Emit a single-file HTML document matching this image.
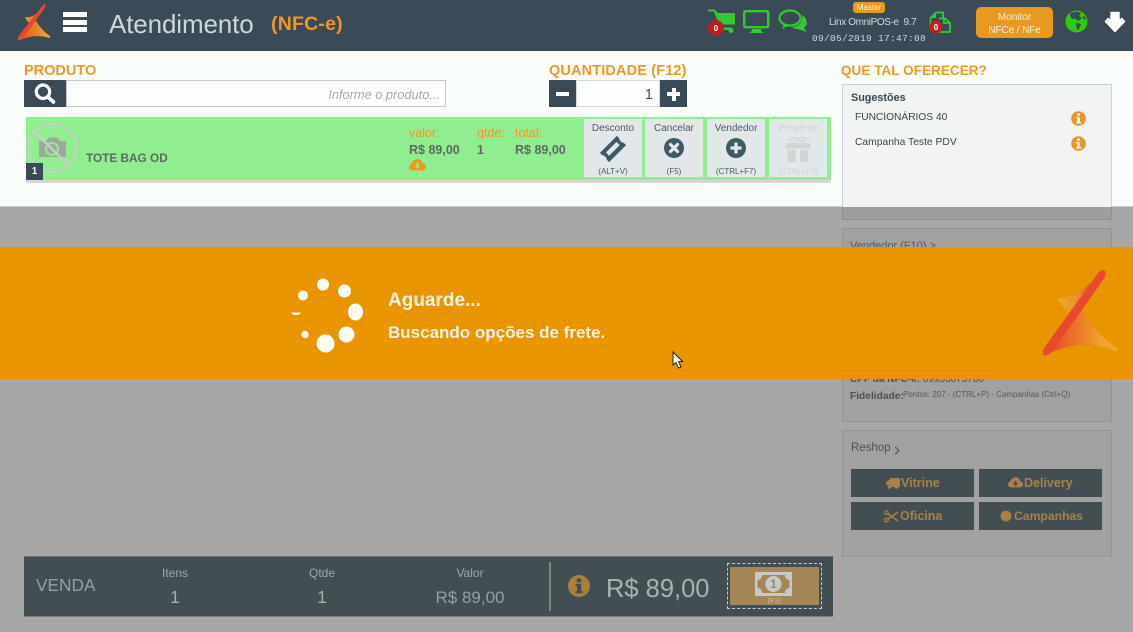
<!DOCTYPE html>
<html lang="pt-BR"><head><meta charset="utf-8"><title>Atendimento</title>
<style>
html,body{margin:0;padding:0}
body{width:1133px;height:632px;position:relative;overflow:hidden;background:#a7a7a7;font-family:"Liberation Sans",sans-serif}
.a{position:absolute;white-space:nowrap}
svg{position:absolute;display:block;overflow:visible}
.or{color:#ef9722;font-weight:700}
.act{position:absolute;top:119px;width:58px;height:58px;background:#e2e8e9;color:#4a5a64;font-size:10px;text-align:center}
.act span{position:absolute;left:0;width:100%}
.btn{position:absolute;width:123px;height:28px;background:#434e53}
.bt{position:absolute;color:#a7814a;font-size:12.5px;font-weight:700;line-height:16px;white-space:nowrap}
</style></head><body>
<!-- top white area -->
<div class="a" style="left:0;top:51px;width:1133px;height:156px;background:#f9fdfa;border-bottom:1px solid #c8c8c8;box-sizing:border-box"></div>
<!-- header -->
<div class="a" style="left:0;top:0;width:1133px;height:51px;background:#3a4a57"></div>
<svg style="left:17px;top:3px" width="36" height="39" viewBox="0 0 36 39">
<defs>
<linearGradient id="g1" x1="0" y1="0" x2="1" y2="0"><stop offset="0" stop-color="#e4572b"/><stop offset=".5" stop-color="#ea7f26"/><stop offset="1" stop-color="#f2ae2c"/></linearGradient>
<linearGradient id="g1b" x1="0" y1="0" x2="1" y2="0"><stop offset="0" stop-color="#f0a02a"/><stop offset="1" stop-color="#e4572b"/></linearGradient>
</defs>
<path d="M8 14C12 15 17 13 21 9L15 22C12 20 9 17 8 14Z" fill="url(#g1b)"/>
<path d="M14 20L19 18C23 24 28 30 33 33C34 35 32 35 31 34.5C22 32 12 33 3 37Z" fill="url(#g1)"/>
<path d="M27 1C29 1 29 3 27 6L9 31C6 35 3 38 1.5 37.5C0 37 1 34 3.5 30.5Z" fill="#e5492b"/>
</svg>
<div class="a" style="left:63px;top:12px;width:24px;height:5px;background:#fff"></div>
<div class="a" style="left:63px;top:19.5px;width:24px;height:5px;background:#fff"></div>
<div class="a" style="left:63px;top:27px;width:24px;height:5px;background:#fff"></div>
<div class="a" style="left:109px;top:7px;font-size:26px;line-height:34px;color:#cbd9dc;letter-spacing:-.13px">Atendimento</div>
<div class="a" style="left:271px;top:10px;font-size:19.5px;line-height:28px;font-weight:700;color:#ef9722;letter-spacing:.2px">(NFC-e)</div>
<!-- cart -->
<svg style="left:707px;top:9px" width="28" height="27" viewBox="0 0 28 27"><path d="M1 .5H8L10.500 4H28V15.500H12L7 2.500H1Z" fill="#2fcc2f"/><rect x="12" y="18.500" width="13" height="2.500" fill="#2fcc2f"/><circle cx="24" cy="21.500" r="2.500" fill="#2fcc2f"/><circle cx="9" cy="19" r="8" fill="#b9201f"/><text x="9" y="22" font-size="8" font-weight="700" fill="#fff" text-anchor="middle" font-family="Liberation Sans">0</text></svg>
<!-- monitor -->
<svg style="left:743px;top:10px" width="27" height="24" viewBox="0 0 27 24"><rect x="1.200" y="1.200" width="24" height="16" rx="1.500" fill="none" stroke="#2fcc2f" stroke-width="2.400"/><path d="M9 19H18V21L21 23H6L9 21Z" fill="#2fcc2f"/></svg>
<!-- chat -->
<svg style="left:778px;top:9px" width="30" height="25" viewBox="0 0 30 25"><ellipse cx="12" cy="9" rx="10.500" ry="7.500" fill="none" stroke="#2fcc2f" stroke-width="2.200"/><path d="M6 15L4 20L11 16.500Z" fill="#2fcc2f"/><path d="M24 6C30 10 30 16 26 19L29 23L20 20C17 20 15 19 14 18C20 18 25 13 24 6Z" fill="#2fcc2f"/></svg>
<div class="a" style="left:853px;top:2px;width:32px;height:11px;background:#e89a20;border-radius:3px;color:#f4f1df;font-size:8px;line-height:11px;text-align:center">Master</div>
<div class="a" style="left:829px;top:16px;font-size:10px;line-height:13px;color:#d2dadb;letter-spacing:-.38px">Linx OmniPOS-e&nbsp; 9.7</div>
<div class="a" style="left:812px;top:32px;font-family:'Liberation Mono',monospace;font-size:9.500px;line-height:13px;color:#d2dadb;letter-spacing:.3px">09/05/2019 17:47:08</div>
<!-- doc -->
<svg style="left:929px;top:11px" width="24" height="24" viewBox="0 0 24 24"><path d="M1.500 16V7L7 1.500H14V8" fill="none" stroke="#2fcc2f" stroke-width="1.800"/><path d="M2 7H7V2Z" fill="#2fcc2f"/><path d="M10 7.500H16L21 11.500V21H9" fill="none" stroke="#2fcc2f" stroke-width="1.800"/><path d="M15 7.500V12H21" fill="none" stroke="#2fcc2f" stroke-width="1.800"/><circle cx="7" cy="16" r="6.500" fill="#c0201f"/><text x="7" y="19" font-size="8" font-weight="700" fill="#fff" text-anchor="middle" font-family="Liberation Sans">0</text></svg>
<div class="a" style="left:976px;top:7px;width:77px;height:27px;background:#e89a20;border-radius:5px;color:#f7efdf;font-size:10px;line-height:13px;text-align:center;padding-top:4px">Monitor<br><span style="letter-spacing:-.1px">NFCe / NFe</span></div>
<!-- globe -->
<svg style="left:1065px;top:10px" width="23" height="23" viewBox="0 0 23 23"><circle cx="11.500" cy="11.500" r="11" fill="#2ccb0e"/><path d="M5 3L12 1.500L16 3L14 6L17 8L13 11L11 9L7 9L5 6ZM11 13L16 14L14 19L12 20ZM18 5L21 8L20 10L18 8Z" fill="#3a4a57"/></svg>
<!-- arrow -->
<svg style="left:1104px;top:11px" width="22" height="22" viewBox="0 0 22 22"><path d="M7 1.500H15V9.500L18 7.500L20.500 10.500L11 20.500L1.500 10.500L4 7.500L7 9.500Z" fill="#fff" stroke="#fff" stroke-width="1.500" stroke-linejoin="round"/></svg>

<!-- produto -->
<div class="a or" style="left:24px;top:63px;font-size:14.500px;line-height:17px">PRODUTO</div>
<div class="a" style="left:24px;top:80px;width:42px;height:27px;background:#3a4a57"></div>
<svg style="left:34px;top:83px" width="22" height="21" viewBox="0 0 22 21"><circle cx="9" cy="8.700" r="6.700" fill="none" stroke="#fff" stroke-width="3.200"/><path d="M13.500 13.500L19.500 19" stroke="#fff" stroke-width="3.600" stroke-linecap="round"/></svg>
<div class="a" style="left:66px;top:80px;width:380px;height:27px;box-sizing:border-box;background:#fcfefd;border:1px solid #c7c9c8;text-align:right;padding-right:5px;color:#a8a8a8;font-size:12.800px;line-height:27px;font-style:italic">Informe o produto...</div>
<div class="a or" style="left:549px;top:63px;font-size:14.500px;line-height:17px;letter-spacing:.14px">QUANTIDADE (F12)</div>
<div class="a" style="left:549px;top:80px;width:27px;height:27px;background:#3a4a57"></div>
<div class="a" style="left:556px;top:92px;width:13px;height:4px;background:#fff"></div>
<div class="a" style="left:576px;top:80px;width:84px;height:27px;box-sizing:border-box;background:#fdfefe;border:1px solid #d6d8d8;text-align:right;padding-right:6px;font-size:14.500px;line-height:29px;color:#4a4a4a">1</div>
<div class="a" style="left:660px;top:80px;width:27px;height:27px;background:#3a4a57"></div>
<div class="a" style="left:667px;top:92px;width:13px;height:4px;background:#fff"></div>
<div class="a" style="left:671.500px;top:87.500px;width:4px;height:13px;background:#fff"></div>

<!-- item row -->
<div class="a" style="left:26px;top:117px;width:805px;height:63px;background:#90ee90"></div>
<div class="a" style="left:26px;top:180px;width:805px;height:3px;background:#d7d7d2"></div>
<svg style="left:27px;top:123px" width="52" height="51" viewBox="0 0 52 51"><circle cx="25.500" cy="25" r="24" fill="none" stroke="#c4d0c4" stroke-width="2"/><path d="M12 18H19L22 14.500H30L33 18H39V34H12Z" fill="#9fa89f"/><circle cx="25" cy="26" r="6" fill="none" stroke="#90ee90" stroke-width="2"/><path d="M9 10L41 42" stroke="#c4d0c4" stroke-width="2.400"/></svg>
<div class="a" style="left:26px;top:163px;width:17px;height:17px;background:#3a4a57;color:#fff;font-size:10px;font-weight:700;line-height:18px;text-align:center">1</div>
<div class="a" style="left:86px;top:150px;font-size:11.800px;line-height:16px;font-weight:700;color:#5e6a60">TOTE BAG OD</div>
<div class="a" style="left:409px;top:126px;font-size:12.500px;line-height:15px;color:#ee9a22">valor:</div>
<div class="a" style="left:477px;top:126px;font-size:12.500px;line-height:15px;color:#ee9a22">qtde:</div>
<div class="a" style="left:515px;top:126px;font-size:12.500px;line-height:15px;color:#ee9a22">total:</div>
<div class="a" style="left:409px;top:142px;font-size:12.500px;line-height:16px;font-weight:700;color:#5e6a60">R$ 89,00</div>
<div class="a" style="left:477px;top:142px;font-size:12.500px;line-height:16px;font-weight:700;color:#5e6a60">1</div>
<div class="a" style="left:515px;top:142px;font-size:12.500px;line-height:16px;font-weight:700;color:#5e6a60">R$ 89,00</div>
<svg style="left:409px;top:159px" width="17" height="12" viewBox="0 0 17 12"><path d="M4 11.500C1.500 11.500 0 10 0 8C0 6.500 1 5.300 2.500 5C3 2.300 5.500 0 8.500 0C11 0 13 1.500 13.500 4C15.500 4.500 17 6 17 8C17 10 15.500 11.500 13.500 11.500Z" fill="#ee9a22"/><path d="M7.500 3.500H9.500V6.500H11.500L8.500 9.500L5.500 6.500H7.500Z" fill="#90ee90"/></svg>

<div class="act" style="left:584px"><span style="top:2px;line-height:15px">Desconto</span><span style="bottom:0;font-size:8px;line-height:11px">(ALT+V)</span></div>
<svg style="left:601px;top:137px" width="24" height="24" viewBox="0 0 24 24"><g transform="rotate(-45 12 12)"><path d="M0 5.500H24V9C22.500 9.500 22.500 14.500 24 15V18.500H0V15C1.500 14.500 1.500 9.500 0 9Z" fill="#3f5967"/><rect x="4.500" y="9.500" width="15" height="4.500" fill="#e2e8e9"/></g></svg>
<div class="act" style="left:645px"><span style="top:2px;line-height:15px">Cancelar</span><span style="bottom:0;font-size:8px;line-height:11px">(F5)</span></div>
<svg style="left:664px;top:138px" width="20" height="20" viewBox="0 0 20 20"><circle cx="10" cy="10" r="10" fill="#3f5967"/><path d="M6.500 6.500L13.500 13.500M13.500 6.500L6.500 13.500" stroke="#e2e8e9" stroke-width="3.200" stroke-linecap="round"/></svg>
<div class="act" style="left:707px"><span style="top:2px;line-height:15px">Vendedor</span><span style="bottom:0;font-size:8px;line-height:11px">(CTRL+F7)</span></div>
<svg style="left:726px;top:138px" width="20" height="20" viewBox="0 0 20 20"><circle cx="10" cy="10" r="10" fill="#3f5967"/><path d="M10 4.500V15.500M4.500 10H15.500" stroke="#e2e8e9" stroke-width="3.200"/></svg>
<div class="act" style="left:769px;color:#cfd4d4"><span style="top:2px;line-height:15px">Presente</span><span style="bottom:0;font-size:8px;line-height:11px">(CTRL+F3)</span></div>
<svg style="left:785px;top:137px" width="26" height="26" viewBox="0 0 26 26"><path d="M.5 6H25V11.500H.5ZM2.500 13H10.500V25H2.500ZM15 13H23V25H15Z" fill="#d0d5d3"/><ellipse cx="8.500" cy="2.500" rx="4" ry="1.700" fill="none" stroke="#d0d5d3" stroke-width="1.200"/><ellipse cx="17" cy="2.500" rx="4" ry="1.700" fill="none" stroke="#d0d5d3" stroke-width="1.200"/></svg>

<!-- right: suggestions -->
<div class="a or" style="left:841px;top:62px;font-size:13.500px;line-height:17px;letter-spacing:.05px">QUE TAL OFERECER?</div>
<div class="a" style="left:842px;top:84px;width:270px;height:123px;box-sizing:border-box;background:#f1f4f2;border:1px solid #c9cfdc;border-bottom:0"></div>
<div class="a" style="left:851px;top:91px;font-size:10.800px;line-height:15px;font-weight:700;color:#3c4750">Sugestões</div>
<div class="a" style="left:855px;top:111px;font-size:10.200px;line-height:14px;color:#3a4450">FUNCIONÁRIOS 40</div>
<div class="a" style="left:855px;top:136px;font-size:10.300px;line-height:14px;color:#3a4450">Campanha Teste PDV</div>
<svg style="left:1070.500px;top:111px" width="15" height="15" viewBox="0 0 15 15"><circle cx="7.500" cy="7.500" r="7.300" fill="#ee9422"/><rect x="6" y="2.500" width="3" height="2.400" fill="#fff"/><path d="M5.200 6H9V11H10V12.500H5.200V11H6.200V7.400H5.200Z" fill="#fff"/></svg>
<svg style="left:1070.500px;top:136px" width="15" height="15" viewBox="0 0 15 15"><circle cx="7.500" cy="7.500" r="7.300" fill="#ee9422"/><rect x="6" y="2.500" width="3" height="2.400" fill="#fff"/><path d="M5.200 6H9V11H10V12.500H5.200V11H6.200V7.400H5.200Z" fill="#fff"/></svg>

<!-- overlay portion of suggestion panel -->
<div class="a" style="left:842px;top:207px;width:270px;height:13px;box-sizing:border-box;background:#9d9e9d;border:1px solid #8d9091;border-top:0"></div>
<!-- client panel -->
<div class="a" style="left:842px;top:228px;width:270px;height:194px;box-sizing:border-box;background:#a1a1a1;border:1px solid #909498"></div>
<div class="a" style="left:850px;top:239px;font-size:11px;line-height:15px;color:#52575c">Vendedor (F10) &gt;</div>
<div class="a" style="left:850px;top:372px;font-size:10px;line-height:15px;font-weight:700;color:#4c5156">CPF da NFC-e: <span style="font-weight:400">09953073700</span></div>
<div class="a" style="left:850px;top:389px;font-size:10.200px;line-height:15px;font-weight:700;color:#4c5156">Fidelidade:</div>
<div class="a" style="left:903px;top:388px;font-size:8px;line-height:14px;color:#53585c">Pontos: 207 - (CTRL+P) - Campanhas (Ctrl+Q)</div>
<!-- reshop -->
<div class="a" style="left:842px;top:430px;width:270px;height:127px;box-sizing:border-box;background:#a1a1a1;border:1px solid #929699"></div>
<div class="a" style="left:851px;top:441px;font-size:11.500px;line-height:15px;color:#4b5157">Reshop</div>
<svg style="left:893px;top:446px" width="8" height="9" viewBox="0 0 8 10"><path d="M2 1L6 5L2 9" fill="none" stroke="#545c62" stroke-width="1.500"/></svg>
<div class="btn" style="left:851px;top:469px"></div>
<div class="bt" style="left:901px;top:475px">Vitrine</div>
<svg style="left:886px;top:478px" width="14" height="11" viewBox="0 0 14 11"><path d="M4 0H14V9H5L4 7H0V4L3 2H4Z" fill="#a7814a"/><circle cx="3.500" cy="9" r="1.800" fill="#a7814a"/><circle cx="10.500" cy="9" r="1.800" fill="#a7814a"/></svg>
<div class="btn" style="left:979px;top:469px"></div>
<div class="bt" style="left:1024px;top:475px">Delivery</div>
<svg style="left:1008px;top:477px" width="15" height="11" viewBox="0 0 17 12"><path d="M4 11.500C1.500 11.500 0 10 0 8C0 6.500 1 5.300 2.500 5C3 2.300 5.500 0 8.500 0C11 0 13 1.500 13.500 4C15.500 4.500 17 6 17 8C17 10 15.500 11.500 13.500 11.500Z" fill="#a7814a"/><path d="M7.500 4H9.500V7H11.500L8.500 10L5.500 7H7.500Z" fill="#434e53"/></svg>
<div class="btn" style="left:851px;top:502px"></div>
<div class="bt" style="left:900px;top:508px">Oficina</div>
<svg style="left:884px;top:510px" width="14" height="13" viewBox="0 0 14 13"><circle cx="2.500" cy="2.800" r="1.800" fill="none" stroke="#a7814a" stroke-width="1.300"/><circle cx="2.500" cy="10.200" r="1.800" fill="none" stroke="#a7814a" stroke-width="1.300"/><path d="M4 4L14 11M4 9L14 2" stroke="#a7814a" stroke-width="1.500"/></svg>
<div class="btn" style="left:979px;top:502px"></div>
<div class="bt" style="left:1014px;top:508px;font-size:12.200px">Campanhas</div>
<svg style="left:1000px;top:510px" width="12" height="12" viewBox="0 0 12 12"><circle cx="6" cy="6" r="5.400" fill="#a7814a"/></svg>

<!-- bottom bar -->
<div class="a" style="left:24px;top:556px;width:809px;height:61px;box-sizing:border-box;background:#434e53;border-top:1px solid #6a7276;border-bottom:1px solid #757c80"></div>
<div class="a" style="left:36px;top:574px;font-size:17.300px;line-height:22px;color:#8da3a3">VENDA</div>
<div class="a" style="left:135px;top:565px;width:80px;text-align:center;font-size:12px;line-height:16px;color:#9ba9ab">Itens</div>
<div class="a" style="left:135px;top:586px;width:80px;text-align:center;font-size:17.500px;line-height:23px;color:#a2afb1">1</div>
<div class="a" style="left:282px;top:565px;width:80px;text-align:center;font-size:12px;line-height:16px;color:#9ba9ab">Qtde</div>
<div class="a" style="left:282px;top:586px;width:80px;text-align:center;font-size:17.500px;line-height:23px;color:#a2afb1">1</div>
<div class="a" style="left:430px;top:565px;width:80px;text-align:center;font-size:12px;line-height:16px;color:#9ba9ab">Valor</div>
<div class="a" style="left:430px;top:586px;width:80px;text-align:center;font-size:17px;line-height:23px;color:#8fa2a3">R$ 89,00</div>
<div class="a" style="left:549px;top:562px;width:2px;height:49px;background:#7f8789"></div>
<svg style="left:568px;top:575px" width="22" height="22" viewBox="0 0 15 15"><circle cx="7.500" cy="7.500" r="7.500" fill="#a7803b"/><rect x="6" y="2.500" width="3" height="2.400" fill="#434e53"/><path d="M5.200 6H9V11H10V12.500H5.200V11H6.200V7.400H5.200Z" fill="#434e53"/></svg>
<div class="a" style="left:606px;top:573px;font-size:25.500px;line-height:32px;color:#a6b2b4">R$ 89,00</div>
<div class="a" style="left:727px;top:563px;width:95px;height:46px;box-sizing:border-box;border:1px dashed #c9cccc"></div>
<div class="a" style="left:730px;top:567px;width:89px;height:38px;background:#a58658"></div>
<svg style="left:755px;top:572px" width="37" height="24" viewBox="0 0 37 24"><path fill-rule="evenodd" d="M0 0H37V24H0ZM7 3C7 6 5 8 2.500 8V16C5 16 7 18 7 21H30C30 18 32 16 34.500 16V8C32 8 30 6 30 3Z" fill="#c7cac9"/><circle cx="18.500" cy="12" r="8" fill="#c7cac9"/><text x="18.500" y="16" font-size="12" font-weight="700" fill="#a58658" text-anchor="middle" font-family="Liberation Sans">1</text></svg>
<div class="a" style="left:730px;top:596px;width:89px;text-align:center;font-size:7.500px;line-height:10px;color:#c7bda8">(F3)</div>

<!-- banner -->
<div class="a" style="left:0;top:247px;width:1133px;height:132px;background:#e89500"></div>
<div class="a" style="left:388px;top:289px;font-size:19px;line-height:23px;font-weight:700;color:#f9f1e4">Aguarde...</div>
<div class="a" style="left:388px;top:322px;font-size:17px;line-height:21px;font-weight:700;color:#f9f1e4">Buscando opções de frete.</div>
<svg style="left:0;top:247px" width="400" height="132" viewBox="0 247 400 132">
<circle cx="323" cy="284.500" r="6" fill="#f9fdfa"/><circle cx="344.500" cy="291" r="6.500" fill="#f9fdfa"/><ellipse cx="355.500" cy="312" rx="7.500" ry="8.500" fill="#f9fdfa"/><circle cx="346.500" cy="334.500" r="8" fill="#f9fdfa"/><circle cx="325.500" cy="343.500" r="9" fill="#f9fdfa"/><circle cx="305" cy="334.500" r="3.700" fill="#f9fdfa"/><path d="M291.500 312.500H300.500C300 316 292 316 291.500 312.500Z" fill="#f9fdfa"/><circle cx="303" cy="295.500" r="5" fill="#f9fdfa"/>
</svg>
<svg style="left:1041px;top:268px" width="78" height="90" viewBox="0 0 78 90">
<defs>
<linearGradient id="g2" x1="0" y1="0" x2="1" y2="0"><stop offset="0" stop-color="#e5482c"/><stop offset=".5" stop-color="#ec7d26"/><stop offset=".75" stop-color="#efa12c"/><stop offset="1" stop-color="#f2ab30"/></linearGradient>
<linearGradient id="g2b" x1="0" y1="0" x2="1" y2="0"><stop offset="0" stop-color="#ecab28"/><stop offset=".6" stop-color="#ee8f2a"/><stop offset="1" stop-color="#e5552c"/></linearGradient>
</defs>
<path d="M17 30C26 31 39 25 50 14L30 46C24 42 19 36 17 30Z" fill="url(#g2b)"/>
<path d="M28 46L38 36C47 56 61 70 76 80C78 83 74 84 71 82C52 73 28 76 4 87Z" fill="url(#g2)"/>
<path d="M62 2C66 2 65 8 62 12L14 80C10 86 3 90 2 86C1 83 4 79 8 73L55 8C57 5 59 2 62 2Z" fill="#e9492d"/>
</svg>
<svg style="left:672px;top:351px" width="11" height="18" viewBox="0 0 11 18"><path d="M1 1V14L4 11.500L6.500 17L9 16L6.500 10.500H10.500Z" fill="#fff" stroke="#222" stroke-width="1"/></svg>
</body></html>
